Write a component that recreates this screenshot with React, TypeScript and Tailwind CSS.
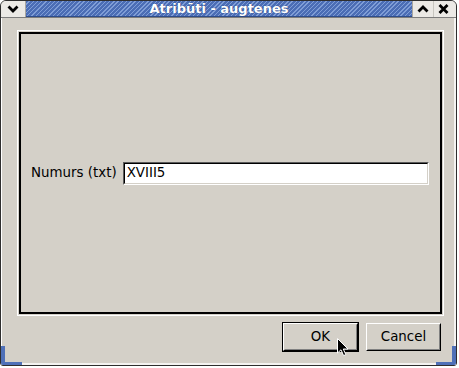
import React from "react";

// Title bar glyphs: thick black chevrons and an X, as in the old GTK theme
function ChevronDown() {
    return (
        <svg width="12" height="8" viewBox="0 0 12 8">
            <polyline points="1.5,1.5 6,6 10.5,1.5" fill="none" stroke="#000" strokeWidth="2.8" />
        </svg>
    );
}

function ChevronUp() {
    return (
        <svg width="12" height="8" viewBox="0 0 12 8">
            <polyline points="1.5,6.5 6,2 10.5,6.5" fill="none" stroke="#000" strokeWidth="2.8" />
        </svg>
    );
}

function CloseX() {
    return (
        <svg width="11" height="10" viewBox="0 0 11 10">
            <path d="M1.5 1 L9.5 9 M9.5 1 L1.5 9" fill="none" stroke="#000" strokeWidth="2.8" />
        </svg>
    );
}

function Cursor() {
    return (
        <svg width="13" height="19" viewBox="0 0 13 19" className="absolute left-[337px] top-[338px]">
            <path
                d="M0.5 0.5 L0.5 15 L4 11.8 L6.6 17.6 L8.8 16.6 L6.3 11 L11 11 Z"
                fill="#000"
                stroke="#fff"
                strokeWidth="1"
                strokeLinejoin="round"
            />
        </svg>
    );
}

export default function App() {
    return (
        <div className="relative w-[459px] h-[368px] bg-white font-['DejaVu_Sans',sans-serif]">
            <div className="relative w-[457px] h-[366px] bg-[#d4d0c8] border border-[#2e2e2e] rounded-t-[6px] rounded-b-[3px] overflow-hidden flex flex-col">
                {/* Title bar */}
                <div className="h-[17px] flex border-b border-[#7d7d7d]">
                    <div className="w-[25px] bg-[#ebe9e5] border-r border-[#a8a6a0] flex items-center justify-center">
                        <ChevronDown />
                    </div>
                    <div className="flex-1 flex items-center justify-center bg-[#4d6fb6] bg-[repeating-linear-gradient(135deg,#4b6db5_0px,#4b6db5_2px,#7f9dd6_2px,#7f9dd6_3px)] border-b border-[#2d4c8c]">
                        <span className="text-[13px] font-bold text-white leading-none [text-shadow:0_0_1px_#1d3670]">
                            Atribūti - augtenes
                        </span>
                    </div>
                    <div className="w-[21px] bg-[#ebe9e5] border-l border-[#a8a6a0] flex items-center justify-center">
                        <ChevronUp />
                    </div>
                    <div className="w-[20px] bg-[#ebe9e5] border-l border-[#c8c6c0] flex items-center justify-center">
                        <CloseX />
                    </div>
                    <div className="w-[3px] bg-[#ebe9e5]" />
                </div>

                {/* Dialog body */}
                <div className="flex-1 flex flex-col border-l border-white border-r-2 border-r-[#f4f3f1] border-b-2 border-b-[#f4f3f1] pt-[12px] pl-[15px]">
                    <div className="w-[427px] h-[286px] border border-white p-px">
                        <div className="w-full h-full border-2 border-black flex items-center pl-[10px] pr-[11px] gap-[6px]">
                            <span className="text-[13.4px] text-black">Numurs (txt)</span>
                            <div className="flex-1 h-[23px] border border-t-[#5a5a5a] border-l-[#5a5a5a] border-b-white border-r-white">
                                <div className="w-full h-full bg-white border border-t-black border-l-black border-b-[#d4d0c8] border-r-[#d4d0c8] flex items-center pl-[2px]">
                                    <span className="text-[13.4px] text-black">XVIII5</span>
                                </div>
                            </div>
                        </div>
                    </div>

                    <div className="flex items-center justify-end gap-[7px] mt-[6px] pr-[13px]">
                        <button className="w-[77px] h-[30px] border border-black">
                            <div className="w-full h-full border border-t-white border-l-white border-b-black border-r-black">
                                <div className="w-full h-full border border-t-[#d4d0c8] border-l-[#d4d0c8] border-b-[#808080] border-r-[#808080] flex items-center justify-center text-[13.4px] text-black">
                                    OK
                                </div>
                            </div>
                        </button>
                        <button className="w-[75px] h-[28px] border border-t-white border-l-white border-b-black border-r-black">
                            <div className="w-full h-full border border-t-[#d4d0c8] border-l-[#d4d0c8] border-b-[#808080] border-r-[#808080] flex items-center justify-center text-[13.4px] text-black">
                                Cancel
                            </div>
                        </button>
                    </div>
                </div>

                {/* Blue resize grips in the bottom corners */}
                <div className="absolute left-0 bottom-0 w-[4px] h-[19px] bg-[#4f70b8] rounded-bl-[2px]" />
                <div className="absolute left-0 bottom-0 w-[21px] h-[3px] bg-[#4f70b8] rounded-bl-[2px]" />
                <div className="absolute right-0 bottom-0 w-[4px] h-[19px] bg-[#4f70b8] rounded-br-[2px]" />
                <div className="absolute right-0 bottom-0 w-[20px] h-[3px] bg-[#4f70b8] rounded-br-[2px]" />
            </div>
            <Cursor />
        </div>
    );
}
